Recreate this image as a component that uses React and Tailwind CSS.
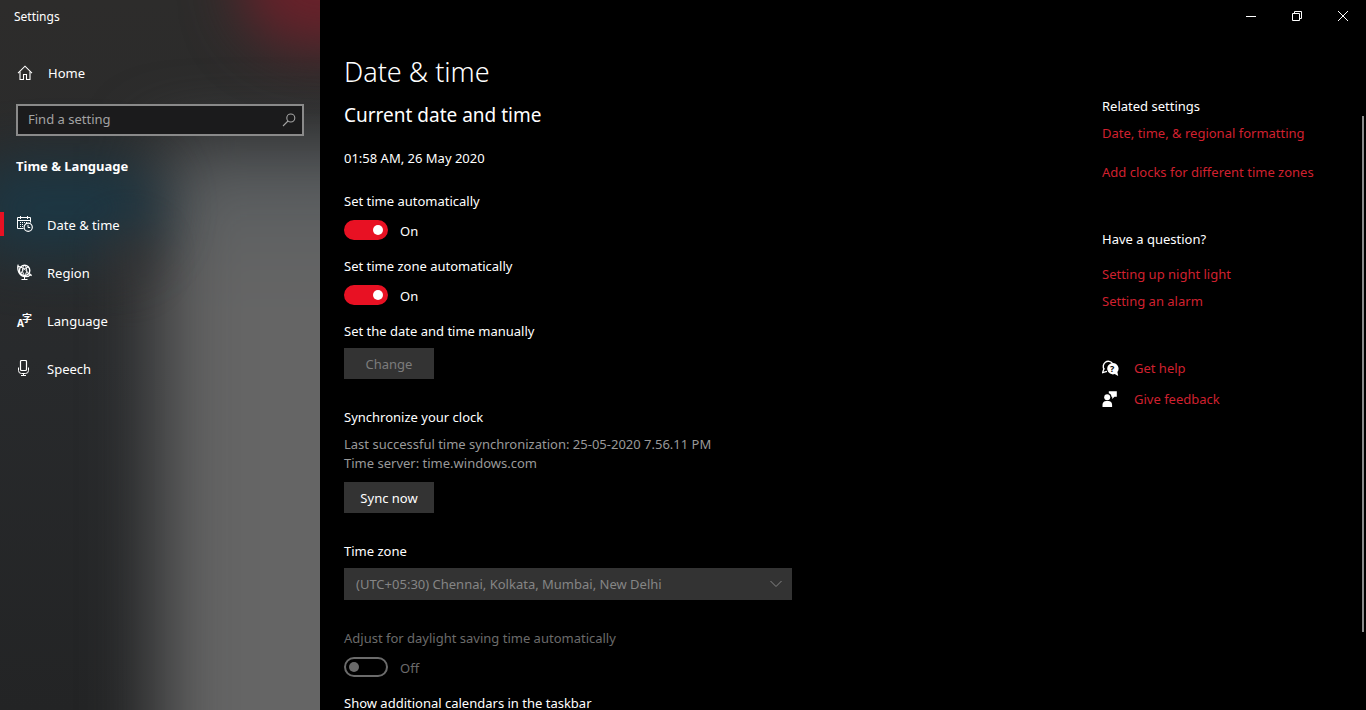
import React, { useState } from "react";

const HomeIcon = () => (
  <svg width="16" height="16" viewBox="0 0 16 16" fill="none" stroke="currentColor" strokeWidth="1.1">
    <path d="M1 8.2 8 1.2l7 7" />
    <path d="M3 6.6v7.9h3.5V9.5h3v5H13V6.6" />
  </svg>
);

const SearchIcon = () => (
  <svg width="14" height="14" viewBox="0 0 14 14" fill="none" stroke="currentColor" strokeWidth="1.1">
    <circle cx="8.8" cy="5" r="4" />
    <path d="M6 8 1 13" />
  </svg>
);

const CalendarIcon = () => (
  <svg width="16" height="16" viewBox="0 0 16 16" fill="none" stroke="currentColor">
    <path d="M6.5 12.500h-6v-11h13v5" />
    <path d="M.5 4.500h13M3.500 0v3M10.500 0v3" />
    <path d="M3 6.500h1M5 6.500h1M7 6.500h1M9 6.500h1M3 8.500h1M5 8.500h1M3 10.500h1M5 10.500h1" />
    <circle cx="11.2" cy="11.3" r="4.1" strokeWidth="1.200" />
    <path d="M11 8.800v2.700h2.200" />
  </svg>
);

const RegionIcon = () => (
  <svg width="16" height="16" viewBox="0 0 16 16" fill="none" stroke="currentColor">
    <circle cx="7.6" cy="6.4" r="5.200" strokeWidth="1.400" />
    <path d="M3.500 3.200c3 .4 6.700 3.600 8 6.600M11.500 3C8.300 3.600 5 6.500 3.800 9.600M7.600 1.200c-2.800 3-2.800 7.200 0 10.300M7.600 1.200c2.800 3 2.800 7.200 0 10.300" />
    <path d="M1.200.6C-.2 5.600 2 11.600 7.500 12.600c2.600.4 5-.5 6.600-2.500M.4 2.300l2.600.6M12 9.500l2.600 2.300" strokeWidth="1.300" />
    <path d="M7.500 12.500v2.500M4.500 15.500h6" />
  </svg>
);

const LanguageIcon = () => (
  <svg className="overflow-visible" width="16" height="16" viewBox="0 0 16 16" fill="currentColor">
    <text x="0" y="15" fontSize="10" fontWeight="700" fontFamily="Noto Sans, sans-serif">A</text>
    <text x="5" y="10" fontSize="10" fontWeight="700" fontFamily="Noto Sans CJK SC, sans-serif">字</text>
  </svg>
);

const MicIcon = () => (
  <svg width="16" height="16" viewBox="0 0 16 16" fill="none" stroke="currentColor">
    <rect x="3.500" y=".5" width="6" height="10" rx="1" strokeWidth="1.200" />
    <path d="M1.500 7.500v3q0 3 3 3h4q3 0 3-3v-3M6.500 13.500v2M4 15.500h5" />
  </svg>
);

const HelpIcon = () => (
  <svg width="17" height="17" viewBox="0 0 17 17" fill="none" stroke="currentColor">
    <path d="M2.200 9.300A5 5 0 1 1 10.400 3.400" strokeWidth="1.400" />
    <path d="M2 8.500.6 12.600 5 11.300" strokeWidth="1.300" />
    <path d="M10.500 3a5.700 5.700 0 1 0 2.200 11.100l3.500 1.900-.8-3.900A5.700 5.700 0 0 0 10.500 3z" fill="currentColor" stroke="none" />
    <text x="8" y="12" fontSize="9" fontWeight="700" fontFamily="Noto Sans, sans-serif" fill="#000" stroke="none">?</text>
  </svg>
);

const FeedbackIcon = () => (
  <svg width="16" height="16" viewBox="0 0 16 16" fill="currentColor">
    <circle cx="5.200" cy="6.200" r="3" />
    <path d="M.5 16v-2.200c0-2.400 1.600-3.800 3.600-3.800h2.400c2 0 3.600 1.400 3.600 3.800V16z" />
    <path d="M6.800.3h8v5.500h-2.300L10.200 8V5.800H9.400C9.500 3.800 8.500 2.600 6.800 2.200z" />
  </svg>
);

const navItems = [
  { label: "Date & time", icon: CalendarIcon, active: true },
  { label: "Region", icon: RegionIcon },
  { label: "Language", icon: LanguageIcon },
  { label: "Speech", icon: MicIcon },
];

function Sidebar() {
  return (
    <aside className="relative isolate flex w-80 shrink-0 flex-col overflow-hidden bg-[#27292b]">
      {/* acrylic backdrop */}
      <div className="absolute inset-0 -z-10 overflow-hidden" aria-hidden="true">
        <div className="absolute inset-0 bg-linear-to-b from-[#2d2c2b] via-[#282a2c] to-[#232425]" />
        <div className="absolute top-36 -bottom-28 left-40 w-96 bg-linear-to-b from-[#565b5e] to-[#656565] to-20% blur-[36px]" />
        <div className="absolute top-40 -left-8 h-24 w-48 rounded-full bg-[#1b3846] opacity-90 blur-[28px]" />
        <div className="absolute top-56 left-24 h-16 w-16 rounded-full bg-[#3b302d] opacity-40 blur-[20px]" />
        <div className="absolute -top-20 left-60 h-32 w-44 rounded-full bg-[#68212a] blur-[28px]" />
      </div>

      <div className="flex h-8 items-center pt-0.5 pl-3.5 text-xs">Settings</div>

      <a href="#home" className="mt-[17px] flex h-12 items-center gap-[15px] pl-[17px]">
        <HomeIcon />
        <span>Home</span>
      </a>

      <div className="mx-4 mt-[7px] flex h-8 items-center border-2 border-[#8a8a8a] bg-[#1b1b1c] pr-1.5 pl-2.5 text-[#a3a3a3]">
        <input
          type="text"
          aria-label="Find a setting"
          placeholder="Find a setting"
          className="min-w-0 flex-1 bg-transparent pb-0.5 outline-none placeholder:text-[#a3a3a3]"
        />
        <SearchIcon />
      </div>

      <h2 className="mt-5 pl-4 font-bold">Time &amp; Language</h2>

      <nav className="mt-6 flex flex-col">
        {navItems.map(({ label, icon: Icon, active }) => (
          <a key={label} href="#nav" className="flex h-12 items-center">
            <span className={active ? "h-6 w-1 bg-[#e81123]" : "h-6 w-1"} />
            <span className="ml-[13px]">
              <Icon />
            </span>
            <span className="ml-3.5 pt-0.5">{label}</span>
          </a>
        ))}
      </nav>
    </aside>
  );
}

function Toggle({ id, label, defaultOn = false, disabled = false }) {
  const [on, setOn] = useState(defaultOn);

  return (
    <div className={disabled ? "text-[#6b6b6b]" : ""}>
      <label htmlFor={id} className="block">
        {label}
      </label>
      <div className="mt-[9px] flex h-5 items-center gap-3">
        <span className="relative h-5 w-11">
          <input
            id={id}
            type="checkbox"
            role="switch"
            checked={on}
            disabled={disabled}
            onChange={(e) => setOn(e.target.checked)}
            className="block h-5 w-11 appearance-none rounded-full border-2 border-[#6b6b6b] checked:border-[#e81123] checked:bg-[#e81123]"
          />
          <span
            className={
              on
                ? "pointer-events-none absolute top-[5px] right-[5px] size-2.5 rounded-full bg-white"
                : "pointer-events-none absolute top-[5px] left-[5px] size-2.5 rounded-full bg-[#6b6b6b]"
            }
          />
        </span>
        <span className="pt-0.5">{on ? "On" : "Off"}</span>
      </div>
    </div>
  );
}

function TitleBar() {
  return (
    <div className="flex h-8 justify-end">
      <button aria-label="Minimize" className="flex w-[46px] items-center justify-center">
        <svg width="10" height="10" viewBox="0 0 10 10" stroke="currentColor">
          <path d="M0 5.500h10" />
        </svg>
      </button>
      <button aria-label="Restore" className="flex w-[46px] items-center justify-center">
        <svg width="10" height="10" viewBox="0 0 10 10" fill="none" stroke="currentColor">
          <path d="M.5 2.500h7v7h-7zM2.500 2.500v-2h7v7h-2" />
        </svg>
      </button>
      <button aria-label="Close" className="flex w-[46px] items-center justify-center">
        <svg width="10" height="10" viewBox="0 0 10 10" stroke="currentColor">
          <path d="M0 0l10 10M10 0 0 10" />
        </svg>
      </button>
    </div>
  );
}

function DateTimeSettings() {
  return (
    <section className="min-w-0 flex-1 pt-5 pl-6">
      <h1 className="text-[27px] leading-10 font-light">Date &amp; time</h1>
      <h2 className="mt-[9px] text-[19px] leading-7">Current date and time</h2>
      <p className="mt-[19px]">01:58 AM, 26 May 2020</p>

      <div className="mt-[23px] flex flex-col gap-4">
        <Toggle id="auto-time" label="Set time automatically" defaultOn />
        <Toggle id="auto-zone" label="Set time zone automatically" defaultOn />
        <div>
          <p>Set the date and time manually</p>
          <button disabled className="mt-[7px] h-[31px] w-[90px] bg-[#333333] text-[#7c7c7c]">
            Change
          </button>
        </div>
      </div>

      <h3 className="mt-7">Synchronize your clock</h3>
      <div className="mt-2 leading-[19px] text-[#999999]">
        <p>Last successful time synchronization: 25-05-2020 7.56.11 PM</p>
        <p>Time server: time.windows.com</p>
      </div>
      <button className="mt-[9px] h-[31px] w-[90px] bg-[#333333]">Sync now</button>

      <label htmlFor="time-zone" className="mt-7 block">
        Time zone
      </label>
      <div className="relative mt-[7px] max-w-md">
        <select
          id="time-zone"
          disabled
          className="h-8 w-full appearance-none bg-[#333333] pr-8 pl-3 text-[#858585] opacity-100"
        >
          <option>(UTC+05:30) Chennai, Kolkata, Mumbai, New Delhi</option>
        </select>
        <svg
          className="pointer-events-none absolute top-3 right-2.5 text-[#858585]"
          width="12"
          height="8"
          viewBox="0 0 12 8"
          fill="none"
          stroke="currentColor"
        >
          <path d="M.5 1 6 6.500 11.500 1" />
        </svg>
      </div>

      <div className="mt-7 flex flex-col gap-4">
        <Toggle id="dst" label="Adjust for daylight saving time automatically" disabled />
        <p>Show additional calendars in the taskbar</p>
      </div>
    </section>
  );
}

function RelatedLinks() {
  return (
    <aside className="w-[260px] shrink-0 pt-16 text-[#d0202f]">
      <h3 className="text-white">Related settings</h3>
      <a href="#formatting" className="mt-[7px] block">
        Date, time, &amp; regional formatting
      </a>
      <a href="#clocks" className="mt-[19px] block">
        Add clocks for different time zones
      </a>

      <h3 className="mt-[47px] text-white">Have a question?</h3>
      <a href="#night-light" className="mt-[15px] block">
        Setting up night light
      </a>
      <a href="#alarm" className="mt-[7px] block">
        Setting an alarm
      </a>

      <a href="#help" className="mt-[47px] flex items-center">
        <span className="w-8 text-white">
          <HelpIcon />
        </span>
        Get help
      </a>
      <a href="#feedback" className="mt-[11px] flex items-center">
        <span className="w-8 text-white">
          <FeedbackIcon />
        </span>
        Give feedback
      </a>
    </aside>
  );
}

function App() {
  return (
    <div className="flex h-screen overflow-hidden bg-black font-['Noto_Sans',sans-serif] text-[13px] leading-5 text-white">
      <Sidebar />
      <main className="flex min-w-0 flex-1 flex-col">
        <TitleBar />
        <div className="flex min-h-0 flex-1">
          <DateTimeSettings />
          <RelatedLinks />
          <div className="mt-[84px] mr-0.5 mb-[78px] w-0.5 bg-[#8a8a8a]" aria-hidden="true" />
        </div>
      </main>
    </div>
  );
}

export default App;
